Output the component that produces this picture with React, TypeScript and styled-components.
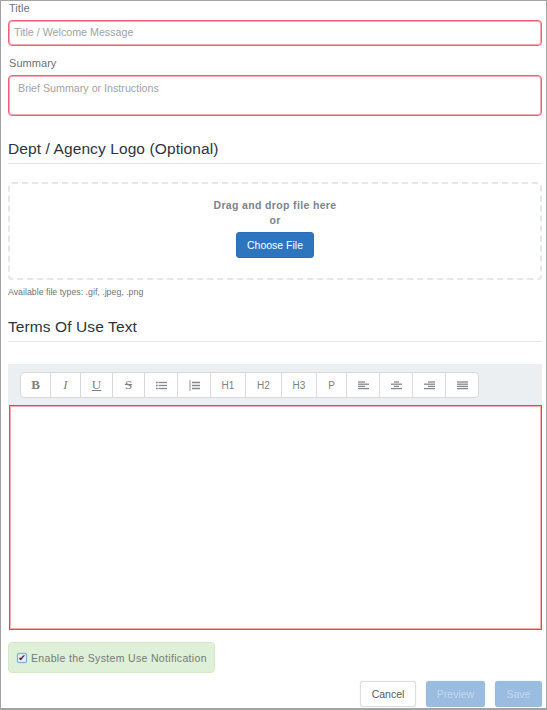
import React from "react";
import styled, { createGlobalStyle } from "styled-components";

const GlobalStyle = createGlobalStyle`
  html, body {
    margin: 0;
    padding: 0;
    background: #fff;
  }
  * {
    box-sizing: border-box;
  }
`;

const Page = styled.div`
  width: 547px;
  height: 710px;
  padding: 2px 4px 0 7px;
  border-style: solid;
  border-color: #a3a3a3;
  border-width: 1px 1px 2px 1px;
  overflow: hidden;
  font-family: "Liberation Sans", Arial, sans-serif;
  display: flex;
  flex-direction: column;
`;

const FieldLabel = styled.label`
  display: block;
  height: 17px;
  padding-left: 1px;
  font-size: 11px;
  line-height: 11px;
  letter-spacing: 0.05px;
  color: #6d7278;
`;

const TitleInput = styled.input`
  display: block;
  flex: none;
  width: 100%;
  height: 26px;
  padding: 0 5px 2px;
  margin-bottom: 12px;
  border: 1px solid #ee6078;
  border-radius: 4px;
  background: #fff;
  font: 10.7px "Liberation Sans", Arial, sans-serif;
  box-shadow: inset 0 0 0 1px rgba(238, 96, 120, 0.55);
  outline: none;
  &::placeholder {
    color: #a0a3a7;
    opacity: 1;
  }
`;

const SummaryInput = styled.textarea`
  display: block;
  flex: none;
  width: 100%;
  height: 41px;
  padding: 5px 9px;
  border: 1px solid #ee6078;
  border-radius: 4px;
  background: #fff;
  font: 10.7px/14px "Liberation Sans", Arial, sans-serif;
  box-shadow: inset 0 0 0 1px rgba(238, 96, 120, 0.55);
  outline: none;
  resize: none;
  &::placeholder {
    color: #a0a3a7;
    opacity: 1;
  }
`;

const SectionHeading = styled.h2<{ $top: number }>`
  flex: none;
  margin: ${(p) => p.$top}px 0 0;
  height: 28px;
  font-size: 15.5px;
  line-height: 26px;
  font-weight: 400;
  letter-spacing: 0.1px;
  color: #2b3440;
  border-bottom: 1px solid #e4e6e8;
`;

const DropZone = styled.div`
  flex: none;
  margin-top: 18px;
  height: 98px;
  border: 2px dashed #e2e7ea;
  border-radius: 4px;
  display: flex;
  flex-direction: column;
  align-items: center;
  padding-top: 14px;
`;

const DropText = styled.div`
  font-size: 10.5px;
  line-height: 15px;
  font-weight: 700;
  letter-spacing: 0.35px;
  color: #7d848c;
`;

const ChooseButton = styled.button`
  margin-top: 4px;
  width: 78px;
  height: 26px;
  padding: 0;
  border: 1px solid #2c6fb6;
  border-radius: 3px;
  background: #2e75c0;
  color: #fff;
  font: 10.5px "Liberation Sans", Arial, sans-serif;
`;

const HelpText = styled.p`
  flex: none;
  margin: 6px 0 0;
  font-size: 8.8px;
  line-height: 12px;
  color: #6f7377;
`;

const ToolbarBand = styled.div`
  flex: none;
  margin-top: 22px;
  height: 41px;
  padding: 8px 12px 0;
  background: #eceff2;
`;

const ButtonGroup = styled.div`
  display: inline-flex;
  height: 26px;
  border: 1px solid #d8d9da;
  border-radius: 4px;
  background: #fff;
`;

const ToolButton = styled.button<{ $width: number }>`
  width: ${(p) => p.$width}px;
  padding: 0;
  border: 0;
  border-right: 1px solid #d8d9da;
  background: transparent;
  color: #7c7f83;
  font: 10px "Liberation Sans", Arial, sans-serif;
  display: flex;
  align-items: center;
  justify-content: center;
  &:last-child {
    border-right: 0;
  }
`;

const SerifGlyph = styled.span<{ $bold?: boolean; $italic?: boolean; $under?: boolean; $strike?: boolean }>`
  font-family: "Liberation Serif", "Times New Roman", serif;
  font-size: 13px;
  font-weight: ${(p) => (p.$bold ? 700 : 400)};
  font-style: ${(p) => (p.$italic ? "italic" : "normal")};
  text-decoration: ${(p) => (p.$under ? "underline" : p.$strike ? "line-through" : "none")};
`;

const Editor = styled.div`
  flex: none;
  height: 225px;
  margin-left: 1px;
  border: 1px solid #e8444f;
  background: #fff;
  box-shadow: inset 0 0 0 1px rgba(236, 74, 86, 0.45);
`;

const NoticeBox = styled.label`
  flex: none;
  margin-top: 12px;
  width: 207px;
  height: 31px;
  padding-left: 8px;
  display: flex;
  align-items: center;
  gap: 4px;
  background: #dff0d8;
  border: 1px solid #d6e9c6;
  border-radius: 4px;
  font-size: 10.5px;
  letter-spacing: 0.33px;
  white-space: nowrap;
  color: #74797a;
`;

const NoticeCheck = styled.input`
  appearance: none;
  flex: none;
  position: relative;
  width: 10px;
  height: 10px;
  margin: 0;
  border: 1px solid #7fa8dc;
  border-radius: 2px;
  background: #e6ecf4;
  box-shadow: 0 0 1px #7fa8dc;
  &::after {
    content: "✔";
    position: absolute;
    inset: -1px 0 0 0;
    font: 9px/10px "DejaVu Sans", sans-serif;
    text-align: center;
    color: #2a2a2a;
  }
`;

const Footer = styled.div`
  flex: none;
  margin-top: 8px;
  display: flex;
  justify-content: flex-end;
  gap: 10px;
`;

const FooterButton = styled.button<{ $width: number; $primary?: boolean }>`
  width: ${(p) => p.$width}px;
  height: 26px;
  padding: 0;
  border: 1px solid ${(p) => (p.$primary ? "#98bbe0" : "#dcdfe2")};
  border-radius: 3px;
  background: ${(p) => (p.$primary ? "#99bce0" : "#fff")};
  color: ${(p) => (p.$primary ? "#c5d8ec" : "#555b61")};
  font: 10.5px "Liberation Sans", Arial, sans-serif;
  box-shadow: 0 0 1px ${(p) => (p.$primary ? "#98bbe0" : "#cfd3d6")};
`;

const LineIcon = ({ lines, dots }: { lines: number[][]; dots?: number[][] }) => (
  <svg width="11" height="9" viewBox="0 0 11 9" fill="none" stroke="#85888c" strokeWidth="1.3">
    {lines.map(([x1, y, x2], i) => (
      <line key={i} x1={x1} y1={y} x2={x2} y2={y} />
    ))}
    {dots?.map(([cx, cy], i) => (
      <circle key={i} cx={cx} cy={cy} r="0.9" fill="#85888c" stroke="none" />
    ))}
  </svg>
);

const ROWS = [1, 3.2, 5.4, 7.6];

const icons = {
  ul: <LineIcon lines={[[2.5, 1.5, 11], [2.5, 4.5, 11], [2.5, 7.5, 11]]} dots={[[0.9, 1.5], [0.9, 4.5], [0.9, 7.5]]} />,
  ol: (
    <svg width="11" height="11" viewBox="0 0 11 11" fill="none" stroke="#85888c" strokeWidth="1.3">
      <path d="M1 0V11" strokeWidth="0.9" />
      <path d="M3 2.5H11M3 5.5H11M3 8.5H11" />
    </svg>
  ),
  left: <LineIcon lines={ROWS.map((y, i) => [0, y, i % 2 ? 11 : 7])} />,
  center: <LineIcon lines={ROWS.map((y, i) => (i % 2 ? [0, y, 11] : [3, y, 8]))} />,
  right: <LineIcon lines={ROWS.map((y, i) => [i % 2 ? 0 : 4, y, 11])} />,
  justify: <LineIcon lines={ROWS.map((y) => [0, y, 11])} />,
};

const App = () => {
  return (
    <Page>
      <GlobalStyle />
      <FieldLabel>Title</FieldLabel>
      <TitleInput placeholder="Title / Welcome Message" />
      <FieldLabel>Summary</FieldLabel>
      <SummaryInput placeholder="Brief Summary or Instructions" />
      <SectionHeading $top={20}>Dept / Agency Logo (Optional)</SectionHeading>
      <DropZone>
        <DropText>Drag and drop file here</DropText>
        <DropText>or</DropText>
        <ChooseButton>Choose File</ChooseButton>
      </DropZone>
      <HelpText>Available file types: .gif, .jpeg, .png</HelpText>
      <SectionHeading $top={16}>Terms Of Use Text</SectionHeading>
      <ToolbarBand>
        <ButtonGroup>
          <ToolButton $width={30}><SerifGlyph $bold>B</SerifGlyph></ToolButton>
          <ToolButton $width={30}><SerifGlyph $italic>I</SerifGlyph></ToolButton>
          <ToolButton $width={32}><SerifGlyph $under>U</SerifGlyph></ToolButton>
          <ToolButton $width={32}><SerifGlyph $strike>S</SerifGlyph></ToolButton>
          <ToolButton $width={33}>{icons.ul}</ToolButton>
          <ToolButton $width={33}>{icons.ol}</ToolButton>
          <ToolButton $width={35}>H1</ToolButton>
          <ToolButton $width={36}>H2</ToolButton>
          <ToolButton $width={35}>H3</ToolButton>
          <ToolButton $width={30}>P</ToolButton>
          <ToolButton $width={33}>{icons.left}</ToolButton>
          <ToolButton $width={33}>{icons.center}</ToolButton>
          <ToolButton $width={33}>{icons.right}</ToolButton>
          <ToolButton $width={32}>{icons.justify}</ToolButton>
        </ButtonGroup>
      </ToolbarBand>
      <Editor />
      <NoticeBox>
        <NoticeCheck type="checkbox" defaultChecked />
        Enable the System Use Notification
      </NoticeBox>
      <Footer>
        <FooterButton $width={56}>Cancel</FooterButton>
        <FooterButton $width={59} $primary>Preview</FooterButton>
        <FooterButton $width={47} $primary>Save</FooterButton>
      </Footer>
    </Page>
  );
};

export default App;
